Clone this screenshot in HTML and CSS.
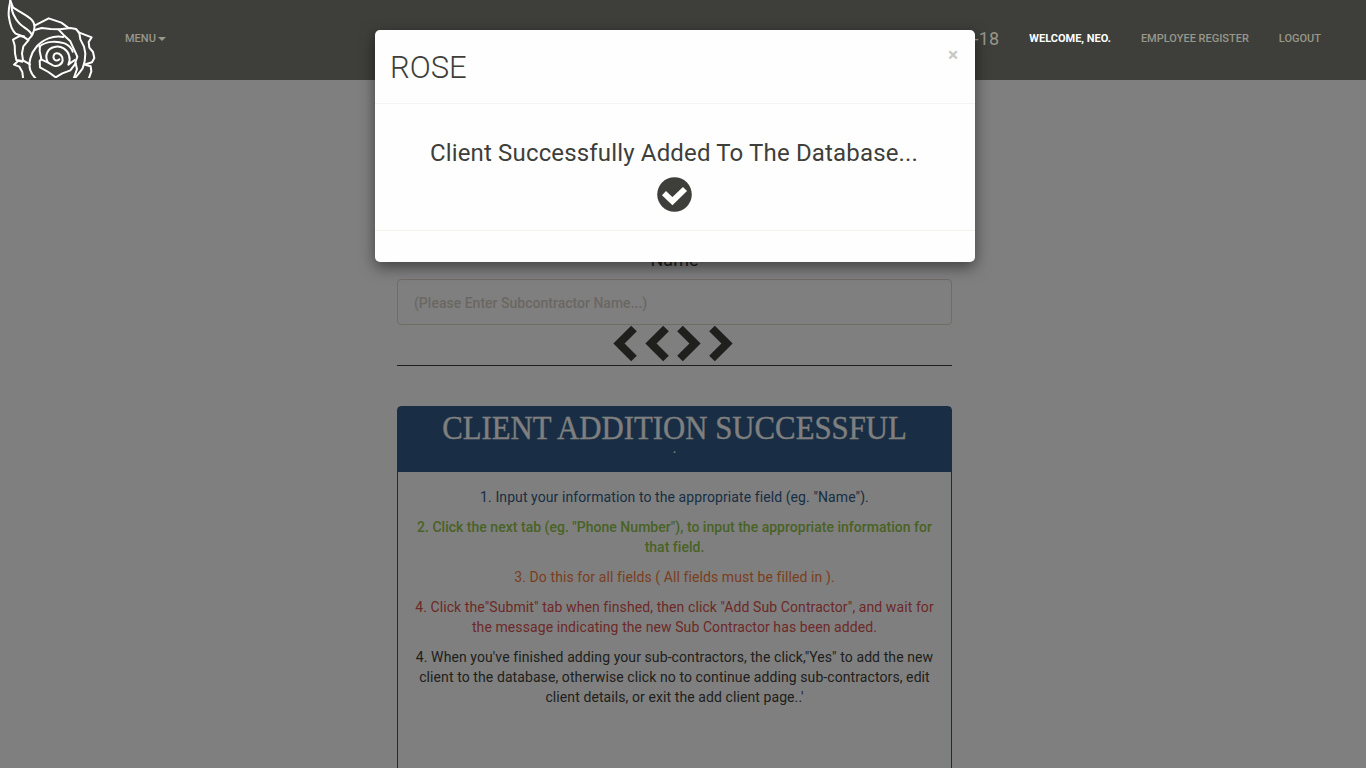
FILE: index.html
```html
<!DOCTYPE html>
<html lang="en">
<head>
<meta charset="utf-8">
<title>Rose</title>
<link rel="stylesheet" href="styles.css">
</head>
<body>
<nav class="navbar">
  <svg class="logo" viewBox="0 0 288 234" fill="none" stroke="#fff" stroke-width="6" stroke-linejoin="round" stroke-linecap="round">
    <path d="M31 2C27 20 24 38 27 52C30 74 36 91 47 101C59 106 74 109 85 121"/>
    <path d="M31 2L39 22C56 34 84 48 94 58C106 70 106 85 98 102C94 110 90 113 85 119"/>
    <path d="M34 17C35 34 44 55 58 70C72 85 92 90 96 106"/>
    <path d="M105 76L146 55L184 68L206 84"/>
    <path d="M104 90L125 84L152 87L180 88L211 84L228 87L238 99L241 118L252 140L256 160L254 184L248 205L236 221L226 233"/>
    <path d="M72 109L57 109L39 119L44 136L45 160L49 180L67 183"/>
    <path d="M85 121L70 139L66 160L69 181L90 193"/>
    <path d="M67 185L55 182L42 194L58 200L67 216L69 233"/>
    <path d="M190 111C160 105 128 118 109 141C92 160 84 190 91 211C94 221 101 230 108 236"/>
    <path d="M176 89L190 104L211 124L222 148L232 170L226 187L231 207L221 236"/>
    <path d="M120 137L119 153L124 177L119 183L120 202L145 216L167 232L187 220L211 211L227 190"/>
    <path d="M123 178L143 187L159 196C171 202 187 193 188 181C189 169 180 159 169 160C160 162 158 171 163 178C167 183 175 183 178 178"/>
    <path d="M143 186C133 166 143 145 163 141C184 136 202 149 207 166C212 181 207 190 205 194L224 180"/>
    <path d="M118 140C138 123 169 122 194 130C208 136 216 148 218 155"/>
    <path d="M236 97L275 112L266 126L268 143L279 156L283 174L276 187L252 194"/>
    <path d="M258 195L272 199L274 214L267 234"/>
  </svg>
  <a class="nav-link menu">MENU<span class="caret"></span></a>
  <div class="nav-right">
    <span class="date">-18</span>
    <a class="nav-link welcome">WELCOME, NEO.</a>
    <a class="nav-link register">EMPLOYEE REGISTER</a>
    <a class="nav-link logout">LOGOUT</a>
  </div>
</nav>
<main class="column">
  <label class="field-label">Name</label>
  <div class="field">(Please Enter Subcontractor Name...)</div>
  <div class="arrows">
    <svg viewBox="0 0 26 38"><path d="M21 3.5L6 18.5L21 33.5"/></svg>
    <svg viewBox="0 0 26 38"><path d="M21 3.5L6 18.5L21 33.5"/></svg>
    <svg viewBox="0 0 26 38"><path d="M5 3.5L20 18.5L5 33.5"/></svg>
    <svg viewBox="0 0 26 38"><path d="M5 3.5L20 18.5L5 33.5"/></svg>
  </div>
  <section class="panel">
    <header class="panel-heading"><h2>CLIENT ADDITION SUCCESSFUL</h2><small>.</small></header>
    <div class="panel-body">
      <p class="primary">1. Input your information to the appropriate field (eg. "Name").</p>
      <p class="success">2. Click the next tab (eg. "Phone Number"), to input the appropriate information for<br>that field.</p>
      <p class="warning">3. Do this for all fields ( All fields must be filled in ).</p>
      <p class="danger">4. Click the"Submit" tab when finshed, then click "Add Sub Contractor", and wait for<br>the message indicating the new Sub Contractor has been added.</p>
      <p>4. When you've finished adding your sub-contractors, the click,"Yes" to add the new<br>client to the database, otherwise click no to continue adding sub-contractors, edit<br>client details, or exit the add client page..'</p>
    </div>
  </section>
</main>
<div class="backdrop"></div>
<div class="modal" role="dialog">
  <header class="modal-header"><h3>ROSE</h3><span class="close">×</span></header>
  <div class="modal-body">
    <div class="message">Client Successfully Added To The Database...</div>
    <svg class="check" viewBox="0 0 35 35"><circle cx="17.5" cy="17.5" r="17.3" fill="#3e3f3a"/><path d="M7 16.2L15.4 24.2L28 12" fill="none" stroke="#fff" stroke-width="5.8"/></svg>
  </div>
  <footer class="modal-footer"></footer>
</div>
</body>
</html>
```
FILE: styles.css
```css
* { box-sizing: border-box; }
body {
  margin: 0;
  height: 768px;
  overflow: hidden;
  background: #fff;
  color: #3e3f3a;
  font: 14px/20px Roboto, sans-serif;
}
.navbar {
  position: relative;
  z-index: 2;
  height: 80px;
  display: flex;
  align-items: flex-start;
  background: #3e3f3a;
}
.logo { width: 96px; height: 78px; flex: none; }
.nav-link {
  font-size: 11px;
  line-height: 16px;
  font-weight: 500;
  color: #98978b;
  white-space: nowrap;
  padding-top: 31px;
}
.menu { margin-left: 29px; display: flex; align-items: center; gap: 2px; }
.caret { border: 4px solid transparent; border-top-color: #98978b; border-bottom: 0; }
.nav-right { margin-left: auto; margin-right: 45px; display: flex; align-items: flex-start; gap: 30px; }
.date { font-size: 18px; line-height: 20px; padding-top: 29px; color: #98978b; letter-spacing: .2px; }
.welcome { color: #fff; font-weight: 700; }
.column { width: 555px; margin-left: 397px; padding-top: 169px; display: flex; flex-direction: column; }
.field-label { text-align: center; font-size: 18px; line-height: 22px; }
.field {
  margin-top: 8px;
  height: 46px;
  border: 1px solid #dfd7ca;
  border-radius: 4px;
  padding: 13px 16px;
  color: #d5cfc6;
  font-weight: 500;
  letter-spacing: .01px;
}
.arrows { height: 41px; padding-right: 4px; display: flex; justify-content: center; gap: 6px; border-bottom: 1px solid #3e3f3a; }
.arrows svg { width: 26px; height: 38px; fill: none; stroke: #3e3f3a; stroke-width: 8; }
.arrows svg:nth-child(3) { margin-left: -2px; }
.panel { margin-top: 40px; height: 400px; border: 1px solid #325d88; border-radius: 4px; }
.panel-heading {
  height: 65px;
  background: #325d88;
  color: #fff;
  text-align: center;
  font-family: "Liberation Serif", serif;
}
.panel-heading h2 {
  margin: 0;
  padding-top: 4px;
  font-size: 33px;
  font-weight: 400;
  line-height: 35px;
  white-space: nowrap;
  transform: scaleX(.933);
  -webkit-text-stroke: .3px #fff;
}
.panel-heading small { display: block; font-size: 14px; line-height: 6px; }
.panel-body { padding: 15px; text-align: center; white-space: nowrap; letter-spacing: .09px; }
.panel-body p { margin: 0 0 10px; }
.primary { color: #325d88; }
.panel-body .success { color: #93c54b; font-weight: 500; letter-spacing: .02px; }
.warning { color: #f47c3c; }
.danger { color: #d9534f; }
.backdrop { position: absolute; inset: 0; background: rgba(0, 0, 0, .5); z-index: 1; }
.modal {
  position: absolute;
  z-index: 3;
  left: 375px;
  top: 30px;
  width: 600px;
  height: 232px;
  background: #fefefe;
  border-radius: 5px;
  box-shadow: 0 5px 15px rgba(0, 0, 0, .5);
  display: flex;
  flex-direction: column;
}
.modal-header { height: 74px; border-bottom: 1px solid #f3f3f1; display: flex; justify-content: space-between; padding: 16px 17px 0 15px; }
.modal-header h3 { margin: 0; font-size: 31px; line-height: 43px; font-weight: 300; }
.close { font-size: 19px; line-height: 18px; font-weight: 700; color: #c8c8c6; }
.modal-body { height: 127px; padding: 34px 2px 0 0; border-bottom: 1px solid #f5f4ec; text-align: center; }
.message { font-size: 24px; line-height: 30px; white-space: nowrap; letter-spacing: .16px; }
.check { display: block; width: 35px; height: 35px; margin: 9px auto 0; }
```
